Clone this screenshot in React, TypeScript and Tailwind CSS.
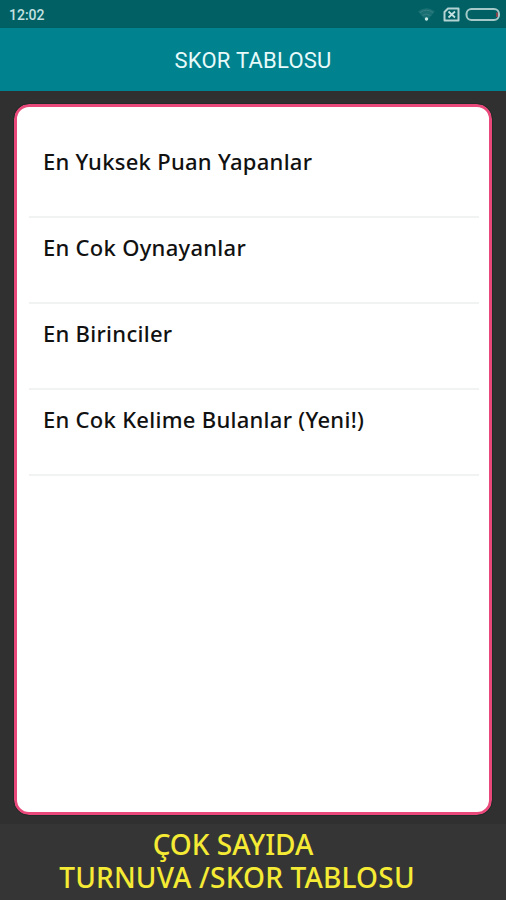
const rows = [
  { label: "En Yuksek Puan Yapanlar" },
  { label: "En Cok Oynayanlar" },
  { label: "En Birinciler" },
  { label: "En Cok Kelime Bulanlar (Yeni!)" },
];

function StatusBar() {
  return (
    <div className="flex h-[28px] items-center justify-between bg-[#006064] pr-[6px] pl-[9px] font-['Roboto',sans-serif] text-[#c4e0e0]">
      <span className="pt-[2px] text-[14px] leading-none font-medium">12:02</span>
      <svg width="83" height="28" viewBox="417 0 83 28" fill="none">
        <path d="M418 11.5Q426.500 5 435 11.500L426.500 21Z" fill="#187074" />
        <path d="M420 12.500Q426.500 8 433 12.500M422.500 15.500Q426.500 12.500 430.500 15.500" stroke="#347f81" />
        <circle cx="426.500" cy="19" r="1.700" fill="#c4e8e6" />
        <path d="M448 8.500H458.500V20.500H444.500V12Z" stroke="#b5d3d3" strokeWidth="2" strokeLinejoin="round" />
        <path d="M448.500 11.500L455 17.500M455 11.500L448.500 17.500" stroke="#c4e0e0" strokeWidth="1.800" />
        <rect x="466.500" y="9" width="32.500" height="11" rx="5" stroke="#a5c9c9" strokeWidth="2" />
        <path d="M497 12.500V17" stroke="#b43e46" strokeWidth="1.500" />
      </svg>
    </div>
  );
}

export default function App() {
  return (
    <div className="flex h-[900px] w-[506px] flex-col overflow-hidden bg-[#303030]">
      <StatusBar />
      <header className="flex h-[63px] items-center justify-center bg-[#00838f] pt-px font-['Roboto',sans-serif] text-[22px] tracking-[0.25px] text-[#e8fafa]">
        <h1>SKOR TABLOSU</h1>
      </header>
      <main className="mx-[14px] mt-[13px] h-[711px] rounded-[15px] border-[3px] border-[#e8487a] bg-white pt-[25px] pr-[10px] pl-[12px] outline outline-1 outline-[#222b29]">
        <ul className="font-['Noto_Sans',sans-serif] text-[22px] font-medium tracking-[0.28px] text-[#111]">
          {rows.map((row) => (
            <li key={row.label} className="h-[86px] border-b-2 border-[#f1f2f2] pt-[14px] pl-[14px] leading-[30px] whitespace-nowrap">
              {row.label}
            </li>
          ))}
        </ul>
      </main>
      <footer className="mt-[9px] flex flex-1 flex-col bg-[#353535] text-center font-['Noto_Sans',sans-serif] text-[28px] leading-[33px] font-medium text-[#f5eb35]">
        <span className="pt-[4px] pr-[40px]">ÇOK SAYIDA</span>
        <span className="pr-[32px] tracking-[0.2px]">TURNUVA /SKOR TABLOSU</span>
      </footer>
    </div>
  );
}
